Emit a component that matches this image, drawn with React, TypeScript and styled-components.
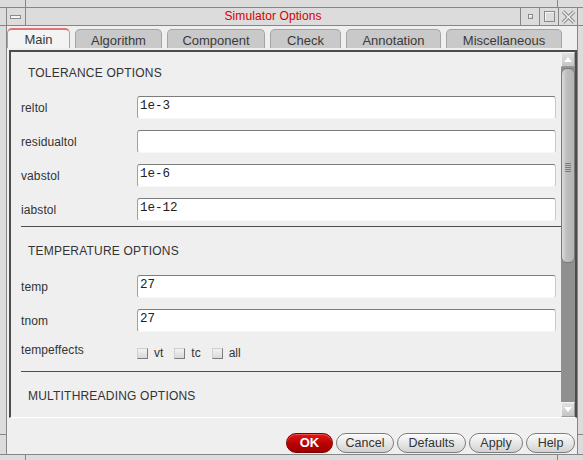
import React from "react";
import styled, { createGlobalStyle } from "styled-components";

const Global = createGlobalStyle`
  html, body { margin: 0; padding: 0; }
  body { background: #dcdcdc; font-family: "Liberation Sans", Arial, sans-serif; }
  * { box-sizing: border-box; }
`;

const FRAME = "#dcdcdc";
const LINE = "#868686";
const CLIENT = "#efefef";
const TEXT = "#333333";

const Window = styled.div`
  width: 583px;
  height: 460px;
  background: ${FRAME};
  display: flex;
  flex-direction: column;
  overflow: hidden;
`;

const HEdge = styled.div<{ $top?: boolean }>`
  flex: none;
  display: flex;
  height: ${(p) => (p.$top ? 8 : 6)}px;
  ${(p) => (p.$top ? `border-bottom: 1px solid ${LINE};` : `border-top: 1px solid ${LINE};`)}
`;

const HCorner = styled.div<{ $right?: boolean }>`
  flex: none;
  width: 26px;
  ${(p) => (p.$right ? `border-left: 1px solid ${LINE};` : `border-right: 1px solid ${LINE};`)}
`;

const Filler = styled.div`
  flex: 1;
`;

const Middle = styled.div`
  flex: 1;
  min-height: 0;
  display: flex;
`;

const VEdge = styled.div<{ $right?: boolean }>`
  flex: none;
  display: flex;
  flex-direction: column;
  width: ${(p) => (p.$right ? 6 : 7)}px;
  ${(p) => (p.$right ? `border-left: 1px solid ${LINE};` : `border-right: 1px solid ${LINE};`)}
`;

const VCorner = styled.div<{ $bottom?: boolean }>`
  flex: none;
  height: ${(p) => (p.$bottom ? 20 : 18)}px;
  ${(p) => (p.$bottom ? `border-top: 1px solid ${LINE};` : `border-bottom: 1px solid ${LINE};`)}
`;

const Inner = styled.div`
  flex: 1;
  min-width: 0;
  display: flex;
  flex-direction: column;
`;

const TitleBar = styled.div`
  flex: none;
  height: 18px;
  display: flex;
  border-bottom: 1px solid ${LINE};
  background: ${FRAME};
`;

const TitleButton = styled.div<{ $side: "left" | "right" }>`
  flex: none;
  width: 19px;
  display: flex;
  align-items: center;
  justify-content: center;
  ${(p) => (p.$side === "left" ? `border-right: 1px solid ${LINE};` : `border-left: 1px solid ${LINE};`)}
`;

const MenuGlyph = styled.div`
  width: 11px;
  height: 4px;
  border: 1px solid #8a8a8a;
  background: #f4f4f4;
  margin-left: -1px;
`;

const SquareGlyph = styled.div<{ $size: number }>`
  width: ${(p) => p.$size}px;
  height: ${(p) => p.$size}px;
  border: 1px solid #8a8a8a;
  background: ${FRAME};
  box-shadow: inset 1px 1px 0 #f6f6f6;
`;

const Title = styled.div`
  flex: 1;
  text-align: center;
  color: #d40000;
  font-size: 12px;
  line-height: 17px;
  letter-spacing: 0.1px;
`;

const Client = styled.div`
  flex: 1;
  min-height: 0;
  display: flex;
  flex-direction: column;
  background: ${CLIENT};
`;

const TabBar = styled.div`
  flex: none;
  height: 24px;
  display: flex;
  align-items: flex-end;
  gap: 5px;
  padding-bottom: 2px;
`;

const Tab = styled.div<{ $w: number; $active?: boolean }>`
  flex: none;
  width: ${(p) => p.$w}px;
  height: ${(p) => (p.$active ? 20 : 19)}px;
  display: flex;
  align-items: center;
  justify-content: center;
  font-size: 13px;
  color: #3a3a3a;
  border: 1px solid #a4a4a4;
  border-bottom: none;
  border-radius: 5px 5px 0 0;
  background: ${(p) => (p.$active ? "#f3f3f3" : "#c9c9c9")};
  ${(p) => (p.$active ? "border-top: 2px solid #e07474;" : "")}
  padding-top: ${(p) => (p.$active ? 1 : 2)}px;
`;

const Panel = styled.div`
  flex: none;
  height: 368px;
  margin-left: 2px;
  display: flex;
  border-top: 2px solid #4c4c4c;
  border-left: 2px solid #4c4c4c;
  border-right: 2px solid #4c4c4c;
  border-bottom: 1px solid #ffffff;
  background: ${CLIENT};
`;

const Content = styled.div`
  flex: 1;
  min-width: 0;
  overflow: hidden;
  padding-left: 10px;
  color: ${TEXT};
`;

const SectionTitle = styled.div<{ $first?: boolean }>`
  height: 14px;
  line-height: 14px;
  font-size: 12px;
  letter-spacing: 0.2px;
  margin: ${(p) => (p.$first ? "14px 0 16px 7px" : "17px 0 17px 7px")};
`;

const Fields = styled.div`
  display: flex;
  flex-direction: column;
  gap: 11px;
  padding-right: 5px;
`;

const FieldRow = styled.div<{ $compact?: boolean }>`
  display: grid;
  grid-template-columns: 116px 1fr;
  align-items: ${(p) => (p.$compact ? "start" : "center")};
  height: ${(p) => (p.$compact ? 14 : 23)}px;
`;

const Label = styled.div`
  font-size: 12px;
  line-height: 14px;
  letter-spacing: 0.1px;
`;

const TextInput = styled.div`
  height: 23px;
  background: #ffffff;
  border-top: 1px solid #7c7c7c;
  border-left: 1px solid #a0a0a0;
  border-right: 1px solid #c9c9c9;
  border-bottom: 1px solid #f7f7f7;
  border-radius: 3px;
  padding-left: 2px;
  font-family: "Liberation Mono", "DejaVu Sans Mono", monospace;
  font-size: 12.5px;
  line-height: 19px;
  color: #222;
`;

const Checks = styled.div`
  display: flex;
  align-items: center;
  margin-top: 4px;
`;

const CheckItem = styled.label`
  display: flex;
  align-items: center;
  gap: 6px;
  margin-right: 11px;
  font-size: 12px;
  line-height: 12px;
`;

const Box = styled.span`
  width: 11px;
  height: 11px;
  background: linear-gradient(#f2f2f2, #d9d9d9);
  border-top: 1px solid #cfcfcf;
  border-left: 1px solid #cfcfcf;
  border-right: 1px solid #7c7c7c;
  border-bottom: 1px solid #7c7c7c;
`;

const Separator = styled.div<{ $gap: number }>`
  height: 1px;
  background: #4f4f4f;
  margin-top: ${(p) => p.$gap}px;
`;

const ScrollBar = styled.div`
  flex: none;
  width: 14px;
  display: flex;
  flex-direction: column;
  background: #8f8f8f;
`;

const Arrow = styled.div`
  flex: none;
  height: 15px;
  display: flex;
  align-items: center;
  justify-content: center;
  background: linear-gradient(#e2e2e2, #c4c4c4);
  border-top: 1px solid #f4f4f4;
  border-left: 1px solid #f4f4f4;
  border-right: 1px solid #9a9a9a;
  border-bottom: 1px solid #9a9a9a;
`;

const Thumb = styled.div`
  flex: none;
  height: 195px;
  margin-top: 1px;
  border: 1px solid #7a7a7a;
  border-radius: 6px;
  background: linear-gradient(to right, #dadada, #bdbdbd 40%, #b5b5b5);
  display: flex;
  align-items: center;
  justify-content: center;
`;

const Grip = styled.div`
  width: 6px;
  height: 9px;
  margin-top: 4px;
  background: repeating-linear-gradient(to bottom, #7c7c7c 0 1px, transparent 1px 2px);
`;

const Track = styled.div`
  flex: 1;
`;

const Footer = styled.div`
  flex: 1;
  display: flex;
  justify-content: flex-end;
  align-items: flex-end;
  gap: 3px;
  padding: 0 2px 1px 0;
`;

const Button = styled.button<{ $w: number; $primary?: boolean }>`
  width: ${(p) => p.$w}px;
  height: 20px;
  padding: 0;
  border-radius: 10px;
  font-family: "Liberation Sans", Arial, sans-serif;
  font-size: ${(p) => (p.$primary ? 13 : 12.5)}px;
  font-weight: ${(p) => (p.$primary ? 700 : 400)};
  color: ${(p) => (p.$primary ? "#ffffff" : TEXT)};
  border: 1px solid ${(p) => (p.$primary ? "#7a0000" : "#7c7c7c")};
  background: ${(p) =>
    p.$primary
      ? "linear-gradient(#e01818, #b80000 55%, #a00000)"
      : "linear-gradient(#fbfbfb, #e8e8e8 50%, #d2d2d2)"};
  box-shadow: inset 0 1px 0 ${(p) => (p.$primary ? "#ee5050" : "#ffffff")};
  line-height: 18px;
`;

const UpTri = () => (
  <svg width="8" height="5" viewBox="0 0 8 5">
    <polygon points="4,0 8,5 0,5" fill="#ffffff" />
  </svg>
);

const DownTri = () => (
  <svg width="8" height="5" viewBox="0 0 8 5">
    <polygon points="0,0 8,0 4,5" fill="#ffffff" />
  </svg>
);

const CloseGlyph = () => (
  <svg width="15" height="14" viewBox="0 0 15 14">
    <line x1="2" y1="1.5" x2="13" y2="12.5" stroke="#8a8a8a" strokeWidth="3.6" />
    <line x1="13" y1="1.5" x2="2" y2="12.5" stroke="#8a8a8a" strokeWidth="3.6" />
    <line x1="2" y1="1.5" x2="13" y2="12.5" stroke="#ececec" strokeWidth="1.6" />
    <line x1="13" y1="1.5" x2="2" y2="12.5" stroke="#ececec" strokeWidth="1.6" />
  </svg>
);

const tabs = [
  { name: "Main", w: 63 },
  { name: "Algorithm", w: 87 },
  { name: "Component", w: 98 },
  { name: "Check", w: 71 },
  { name: "Annotation", w: 95 },
  { name: "Miscellaneous", w: 116 },
];

const tolerance = [
  { label: "reltol", value: "1e-3" },
  { label: "residualtol", value: "" },
  { label: "vabstol", value: "1e-6" },
  { label: "iabstol", value: "1e-12" },
];

const temperature = [
  { label: "temp", value: "27" },
  { label: "tnom", value: "27" },
];

const buttons = [
  { text: "OK", w: 47, primary: true },
  { text: "Cancel", w: 58 },
  { text: "Defaults", w: 69 },
  { text: "Apply", w: 54 },
  { text: "Help", w: 49 },
];

export default function App() {
  return (
    <>
      <Global />
      <Window>
        <HEdge $top>
          <HCorner />
          <Filler />
          <HCorner $right />
        </HEdge>
        <Middle>
          <VEdge>
            <VCorner />
            <Filler />
            <VCorner $bottom />
          </VEdge>
          <Inner>
            <TitleBar>
              <TitleButton $side="left">
                <MenuGlyph />
              </TitleButton>
              <Title>Simulator Options</Title>
              <TitleButton $side="right">
                <SquareGlyph $size={5} />
              </TitleButton>
              <TitleButton $side="right">
                <SquareGlyph $size={11} />
              </TitleButton>
              <TitleButton $side="right">
                <CloseGlyph />
              </TitleButton>
            </TitleBar>
            <Client>
              <TabBar>
                {tabs.map((t, i) => (
                  <Tab key={t.name} $w={t.w} $active={i === 0}>
                    {t.name}
                  </Tab>
                ))}
              </TabBar>
              <Panel>
                <Content>
                  <SectionTitle $first>TOLERANCE OPTIONS</SectionTitle>
                  <Fields>
                    {tolerance.map((f) => (
                      <FieldRow key={f.label}>
                        <Label>{f.label}</Label>
                        <TextInput>{f.value}</TextInput>
                      </FieldRow>
                    ))}
                  </Fields>
                  <Separator $gap={5} />
                  <SectionTitle>TEMPERATURE OPTIONS</SectionTitle>
                  <Fields>
                    {temperature.map((f) => (
                      <FieldRow key={f.label}>
                        <Label>{f.label}</Label>
                        <TextInput>{f.value}</TextInput>
                      </FieldRow>
                    ))}
                    <FieldRow $compact>
                      <Label>tempeffects</Label>
                      <Checks>
                        {["vt", "tc", "all"].map((c) => (
                          <CheckItem key={c}>
                            <Box />
                            {c}
                          </CheckItem>
                        ))}
                      </Checks>
                    </FieldRow>
                  </Fields>
                  <Separator $gap={14} />
                  <SectionTitle>MULTITHREADING OPTIONS</SectionTitle>
                </Content>
                <ScrollBar>
                  <Arrow>
                    <UpTri />
                  </Arrow>
                  <Thumb>
                    <Grip />
                  </Thumb>
                  <Track />
                  <Arrow>
                    <DownTri />
                  </Arrow>
                </ScrollBar>
              </Panel>
              <Footer>
                {buttons.map((b) => (
                  <Button key={b.text} $w={b.w} $primary={b.primary}>
                    {b.text}
                  </Button>
                ))}
              </Footer>
            </Client>
          </Inner>
          <VEdge $right>
            <VCorner />
            <Filler />
            <VCorner $bottom />
          </VEdge>
        </Middle>
        <HEdge>
          <HCorner />
          <Filler />
          <HCorner $right />
        </HEdge>
      </Window>
    </>
  );
}
